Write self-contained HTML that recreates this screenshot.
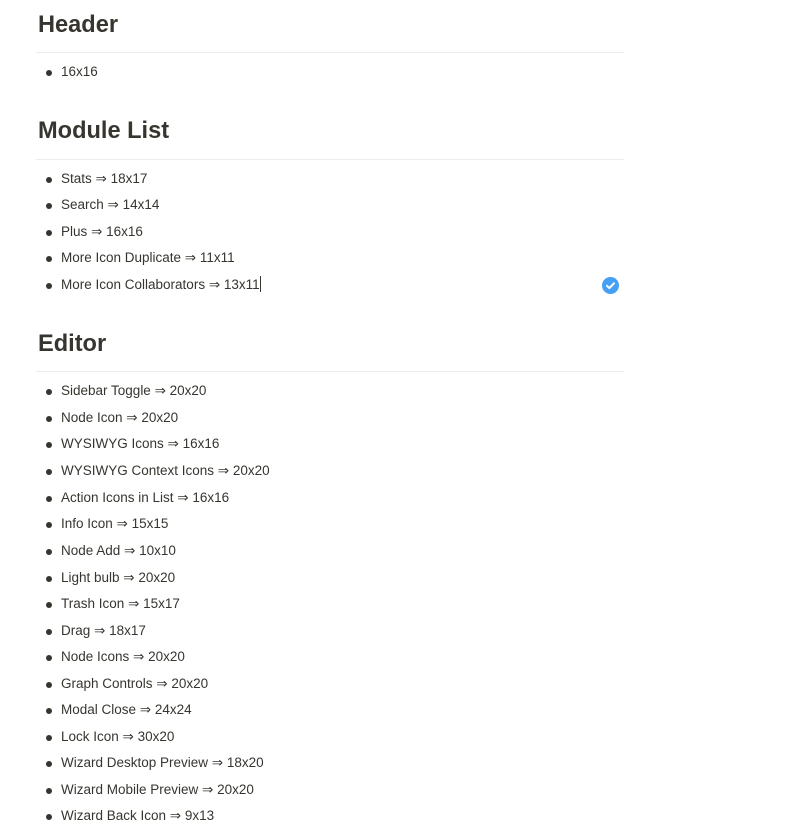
<!DOCTYPE html>
<html><head><meta charset="utf-8"><style>
body{margin:0;width:800px;height:820px;background:#fff;overflow:hidden;position:relative;font-family:"Liberation Sans","DejaVu Sans",sans-serif;color:#37352f}
.h{position:absolute;left:38px;font-size:23.6px;font-weight:bold;line-height:30px;height:30px}
.r{position:absolute;left:36px;width:588px;height:1px;background:#ececeb}
.i{position:absolute;left:61px;font-size:13.5px;line-height:20px;height:20px;white-space:nowrap}
.i:before{content:"";position:absolute;left-14px;left:-15px;top:8px;width:6px;height:6px;border-radius:50%;background:#37352f}
.chk{position:absolute;left:602px;top:277px;width:17px;height:17px;border-radius:50%;background:#45a0f5}
</style></head><body>
<div class="h" style="top:10px">Header</div>
<div class="r" style="top:52px"></div>
<div class="i" style="top:62px">16x16</div>
<div class="h" style="top:116px">Module List</div>
<div class="r" style="top:159px"></div>
<div class="i" style="top:169px">Stats ⇒ 18x17</div>
<div class="i" style="top:195px">Search ⇒ 14x14</div>
<div class="i" style="top:222px">Plus ⇒ 16x16</div>
<div class="i" style="top:248px">More Icon Duplicate ⇒ 11x11</div>
<div class="i" style="top:275px">More Icon Collaborators ⇒ 13x11<span style="display:inline-block;width:1px;height:16px;background:#37352f;vertical-align:-3px"></span></div>
<div class="chk"><svg width="17" height="17" viewBox="0 0 17 17"><path d="M5 8.8l2.4 2.3L12 6.3" fill="none" stroke="#fff" stroke-width="2" stroke-linecap="round" stroke-linejoin="round"/></svg></div>
<div class="h" style="top:329px">Editor</div>
<div class="r" style="top:371px"></div>
<div class="i" style="top:381px">Sidebar Toggle ⇒ 20x20</div>
<div class="i" style="top:408px">Node Icon ⇒ 20x20</div>
<div class="i" style="top:434px">WYSIWYG Icons ⇒ 16x16</div>
<div class="i" style="top:461px">WYSIWYG Context Icons ⇒ 20x20</div>
<div class="i" style="top:488px">Action Icons in List ⇒ 16x16</div>
<div class="i" style="top:514px">Info Icon ⇒ 15x15</div>
<div class="i" style="top:541px">Node Add ⇒ 10x10</div>
<div class="i" style="top:568px">Light bulb ⇒ 20x20</div>
<div class="i" style="top:594px">Trash Icon ⇒ 15x17</div>
<div class="i" style="top:621px">Drag ⇒ 18x17</div>
<div class="i" style="top:647px">Node Icons ⇒ 20x20</div>
<div class="i" style="top:674px">Graph Controls ⇒ 20x20</div>
<div class="i" style="top:700px">Modal Close ⇒ 24x24</div>
<div class="i" style="top:727px">Lock Icon ⇒ 30x20</div>
<div class="i" style="top:753px">Wizard Desktop Preview ⇒ 18x20</div>
<div class="i" style="top:780px">Wizard Mobile Preview ⇒ 20x20</div>
<div class="i" style="top:806px">Wizard Back Icon ⇒ 9x13</div>
</body></html>
